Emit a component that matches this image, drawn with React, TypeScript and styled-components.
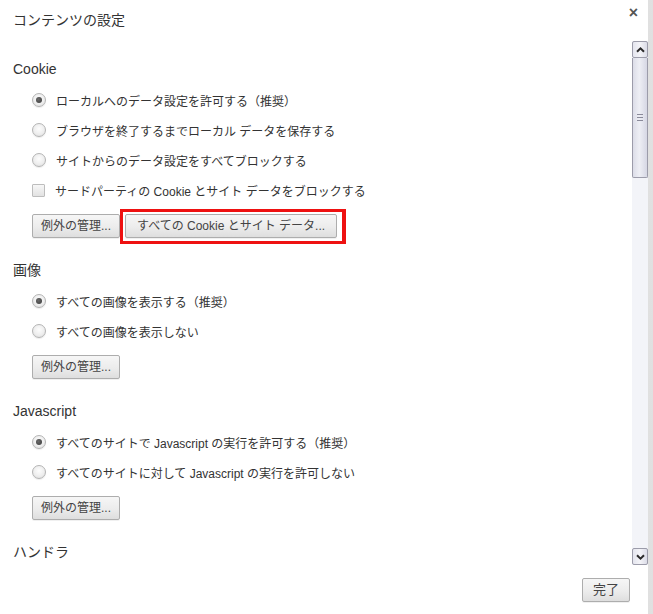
import React from "react";
import styled, { createGlobalStyle } from "styled-components";

const Global = createGlobalStyle`
  html, body { margin: 0; padding: 0; background: #fff; }
  body { font-family: "Liberation Sans", "Noto Sans CJK JP", sans-serif; color: #333; }
`;

const Page = styled.div`
  display: flex;
  width: 653px;
  height: 614px;
  overflow: hidden;
`;

const Dialog = styled.div`
  width: 648px;
  height: 614px;
  display: flex;
  flex-direction: column;
  background: #fff;
`;

const EdgeStrip = styled.div`
  width: 5px;
  height: 614px;
  background-color: #e9e9e9;
  background-image: radial-gradient(#d6d6d6 0.6px, transparent 0.8px);
  background-size: 2px 2px;
`;

const Header = styled.div`
  height: 41px;
  display: flex;
  align-items: flex-start;
  justify-content: space-between;
  padding: 0 10px 0 13px;
`;

const Title = styled.h1`
  margin: 11px 0 0;
  font-size: 14px;
  font-weight: normal;
  line-height: 18px;
  color: #333;
`;

const Close = styled.span`
  margin-top: 5px;
  font-size: 16px;
  font-weight: bold;
  color: #555;
  line-height: 16px;
`;

const Body = styled.div`
  height: 524px;
  display: flex;
`;

const Scroller = styled.div`
  flex: 1;
  overflow: hidden;
  padding: 18px 0 0 13px;
`;

const Section = styled.section`
  & + & {
    margin-top: 22px;
  }
`;

const Heading = styled.h2`
  margin: 0 0 6px;
  height: 20px;
  line-height: 20px;
  font-size: 14px;
  font-weight: normal;
  color: #333;
`;

const Options = styled.div`
  display: flex;
  flex-direction: column;
  padding-left: 19px;
`;

const Row = styled.label`
  height: 30px;
  display: flex;
  align-items: center;
  gap: 10px;
  font-size: 12px;
  color: #333;
`;

const Radio = styled.span<{ $checked?: boolean }>`
  position: relative;
  width: 12px;
  height: 12px;
  border-radius: 50%;
  border: 1px solid #b4b4b4;
  background: radial-gradient(circle at 50% 40%, #fdfdfd 0%, #eeeeee 55%, #dcdcdc 100%);
  box-shadow: 0 1px 1px rgba(0, 0, 0, 0.08);
  flex: none;
  &::after {
    content: "";
    display: ${(p) => (p.$checked ? "block" : "none")};
    position: absolute;
    left: 3px;
    top: 3px;
    width: 6px;
    height: 6px;
    border-radius: 50%;
    background: radial-gradient(circle at 40% 40%, #6a6a6a, #3a3a3a);
  }
`;

const Check = styled.span`
  width: 11px;
  height: 11px;
  border: 1px solid #bdbdbd;
  border-radius: 1px;
  background: linear-gradient(#f7f7f7, #e2e2e2);
  flex: none;
`;

const ButtonRow = styled.div`
  display: flex;
  gap: 5px;
  padding-left: 19px;
  margin-top: 9px;
`;

const Button = styled.button<{ $pad?: number }>`
  height: 24px;
  padding: 0 ${(p) => p.$pad ?? 8}px;
  border: 1px solid #adadad;
  border-radius: 2px;
  background: linear-gradient(#f6f6f6 0%, #ececec 55%, #dedede 100%);
  font-family: "Liberation Sans", "Noto Sans CJK JP", sans-serif;
  font-size: 12px;
  color: #444;
  line-height: 22px;
  box-shadow: 0 1px 0 rgba(0, 0, 0, 0.06);
`;

const Highlight = styled.span`
  position: relative;
  display: inline-flex;
  &::after {
    content: "";
    position: absolute;
    left: -5px;
    top: -5px;
    right: -9px;
    bottom: -6px;
    border: 3px solid #ee1111;
    border-right-width: 4px;
    pointer-events: none;
  }
`;

const ScrollTrack = styled.div`
  width: 16px;
  height: 524px;
  display: flex;
  flex-direction: column;
  background-color: #eef0f5;
  background-image: radial-gradient(#f8f8fb 0.6px, transparent 0.8px);
  background-size: 2px 2px;
`;

const ArrowButton = styled.div`
  width: 14px;
  height: 15px;
  border: 1px solid #9c9caa;
  border-radius: 2px;
  background: linear-gradient(90deg, #e4e5ee, #f4f4f8 50%, #dcdde8);
  display: flex;
  align-items: center;
  justify-content: center;
`;

const Thumb = styled.div`
  width: 14px;
  height: 119px;
  border: 1px solid #9c9caa;
  border-top: none;
  border-radius: 0 0 2px 2px;
  background: linear-gradient(90deg, #dcdde8, #eeeff5 45%, #d6d7e4);
  display: flex;
  align-items: center;
  justify-content: center;
`;

const Grip = styled.div`
  width: 6px;
  height: 7px;
  background: repeating-linear-gradient(#8a8a9a 0 1px, transparent 1px 3px);
`;

const Spacer = styled.div`
  flex: 1;
`;

const Footer = styled.div`
  flex: 1;
  display: flex;
  justify-content: flex-end;
  align-items: flex-start;
  padding: 13px 18px 0 0;
`;

const DoneButton = styled(Button)`
  width: 48px;
  padding: 0;
  font-size: 13px;
`;

const Chevron = ({ down }: { down?: boolean }) => (
  <svg width="9" height="6" viewBox="0 0 9 6">
    <path
      d={down ? "M1 1.2 L4.5 4.6 L8 1.2" : "M1 4.8 L4.5 1.4 L8 4.8"}
      fill="none"
      stroke="#2a2a2a"
      strokeWidth="2"
    />
  </svg>
);

export default function App() {
  return (
    <>
      <Global />
      <Page>
        <Dialog>
          <Header>
            <Title>コンテンツの設定</Title>
            <Close>×</Close>
          </Header>
          <Body>
            <Scroller>
              <Section>
                <Heading>Cookie</Heading>
                <Options>
                  <Row>
                    <Radio $checked />
                    ローカルへのデータ設定を許可する（推奨）
                  </Row>
                  <Row>
                    <Radio />
                    ブラウザを終了するまでローカル データを保存する
                  </Row>
                  <Row>
                    <Radio />
                    サイトからのデータ設定をすべてブロックする
                  </Row>
                  <Row>
                    <Check />
                    サードパーティの Cookie とサイト データをブロックする
                  </Row>
                </Options>
                <ButtonRow>
                  <Button>例外の管理...</Button>
                  <Highlight>
                    <Button $pad={11}>すべての Cookie とサイト データ...</Button>
                  </Highlight>
                </ButtonRow>
              </Section>
              <Section>
                <Heading>画像</Heading>
                <Options>
                  <Row>
                    <Radio $checked />
                    すべての画像を表示する（推奨）
                  </Row>
                  <Row>
                    <Radio />
                    すべての画像を表示しない
                  </Row>
                </Options>
                <ButtonRow>
                  <Button>例外の管理...</Button>
                </ButtonRow>
              </Section>
              <Section>
                <Heading>Javascript</Heading>
                <Options>
                  <Row>
                    <Radio $checked />
                    すべてのサイトで Javascript の実行を許可する（推奨）
                  </Row>
                  <Row>
                    <Radio />
                    すべてのサイトに対して Javascript の実行を許可しない
                  </Row>
                </Options>
                <ButtonRow>
                  <Button>例外の管理...</Button>
                </ButtonRow>
              </Section>
              <Section>
                <Heading>ハンドラ</Heading>
              </Section>
            </Scroller>
            <ScrollTrack>
              <ArrowButton>
                <Chevron />
              </ArrowButton>
              <Thumb>
                <Grip />
              </Thumb>
              <Spacer />
              <ArrowButton>
                <Chevron down />
              </ArrowButton>
            </ScrollTrack>
          </Body>
          <Footer>
            <DoneButton>完了</DoneButton>
          </Footer>
        </Dialog>
        <EdgeStrip />
      </Page>
    </>
  );
}
